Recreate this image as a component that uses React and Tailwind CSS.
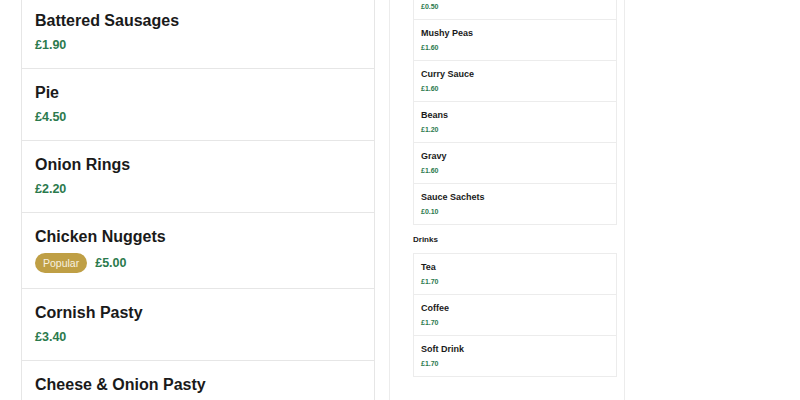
import React from "react";

const mains = [
  { name: "Battered Sausages", price: "£1.90" },
  { name: "Pie", price: "£4.50" },
  { name: "Onion Rings", price: "£2.20" },
  { name: "Chicken Nuggets", price: "£5.00", popular: true },
  { name: "Cornish Pasty", price: "£3.40" },
  { name: "Cheese & Onion Pasty", price: "£3.40" },
];

const sides = [
  { name: "Salt", price: "£0.50" },
  { name: "Mushy Peas", price: "£1.60" },
  { name: "Curry Sauce", price: "£1.60" },
  { name: "Beans", price: "£1.20" },
  { name: "Gravy", price: "£1.60" },
  { name: "Sauce Sachets", price: "£0.10" },
];

const drinks = [
  { name: "Tea", price: "£1.70" },
  { name: "Coffee", price: "£1.70" },
  { name: "Soft Drink", price: "£1.70" },
];

function SmallList({ items }) {
  return (
    <div className="border border-[#ececec] bg-white">
      {items.map((it, i) => (
        <div
          key={it.name}
          className={`pl-[7px] pr-2 pt-[8px] pb-[8px] ${i < items.length - 1 ? "border-b border-[#ececec]" : ""}`}
        >
          <div className="text-[9px] font-bold leading-[11px] text-[#1a1a1a]">{it.name}</div>
          <div className="mt-[4px] text-[7px] font-bold leading-[9px] text-[#2b7a4d]">{it.price}</div>
        </div>
      ))}
    </div>
  );
}

export default function App() {
  return (
    <div
      className="h-[400px] w-[800px] overflow-hidden bg-white flex items-start"
      style={{ fontFamily: '"Liberation Sans", Arial, sans-serif' }}
    >
      <div className="ml-[21px] mt-[-4px] w-[354px] border border-[#e6e6e6] bg-white">
        {mains.map((it) => (
          <div key={it.name} className="border-b border-[#e6e6e6] px-[13px] pt-[14px] pb-[15px]">
            <div className="text-[16px] font-bold leading-[20px] text-[#1a1a1a]">{it.name}</div>
            <div className="mt-[6px] flex items-center gap-2">
              {it.popular && (
                <span className="rounded-full bg-[#bf9f45] px-[8px] text-[10.5px] leading-[20px] text-[#f7f1e0]">
                  Popular
                </span>
              )}
              <span className="text-[12.5px] font-bold leading-[16px] text-[#2b7a4d]">{it.price}</span>
            </div>
          </div>
        ))}
      </div>
      <div className="ml-[14px] h-[400px] w-[236px] border-x border-[#ececec] bg-white pl-[23px] pr-[7px]">
        <div className="mt-[-22px]">
          <SmallList items={sides} />
          <div className="mt-[10px] mb-[8px] text-[8px] font-bold leading-[10px] text-[#1a1a1a]">Drinks</div>
          <SmallList items={drinks} />
        </div>
      </div>
    </div>
  );
}
